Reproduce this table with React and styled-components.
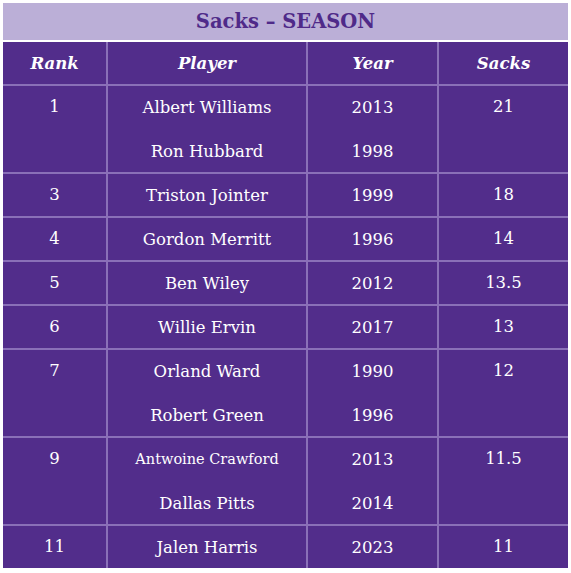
import React from 'react'
import styled, { createGlobalStyle } from 'styled-components'

const GlobalStyle = createGlobalStyle`
    html, body {
        margin: 0;
        padding: 0;
        background: #ffffff;
    }
    body {
        font-family: "DejaVu Serif", "Liberation Serif", serif;
    }
`

const rows = [
    { rank: '1', span: 2, sacks: '21', players: [['Albert Williams', '2013'], ['Ron Hubbard', '1998']] },
    { rank: '3', span: 1, sacks: '18', players: [['Triston Jointer', '1999']] },
    { rank: '4', span: 1, sacks: '14', players: [['Gordon Merritt', '1996']] },
    { rank: '5', span: 1, sacks: '13.5', players: [['Ben Wiley', '2012']] },
    { rank: '6', span: 1, sacks: '13', players: [['Willie Ervin', '2017']] },
    { rank: '7', span: 2, sacks: '12', players: [['Orland Ward', '1990'], ['Robert Green', '1996']] },
    { rank: '9', span: 2, sacks: '11.5', players: [['Antwoine Crawford', '2013', true], ['Dallas Pitts', '2014']] },
    { rank: '11', span: 1, sacks: '11', players: [['Jalen Harris', '2023']] },
]

const Wrapper = styled.div`
    padding: 3px;
    width: 565px;
`

const Title = styled.div`
    background-color: #bbafd7;
    color: #4f2a89;
    font-weight: bold;
    font-size: 19.5px;
    height: 37px;
    line-height: 38px;
    text-align: center;
    margin-bottom: 2px;
`

const Table = styled.table`
    width: 565px;
    border-collapse: collapse;
    table-layout: fixed;
    background-color: #522d8b;
    color: #ffffff;
`

const HeadCell = styled.th`
    height: 42px;
    padding: 0;
    font-size: 16.5px;
    font-weight: bold;
    font-style: italic;
    text-align: center;
    vertical-align: middle;
    border-bottom: 2px solid #8a70b8;
    border-left: ${p => p.$first ? 'none' : '2px solid #8a70b8'};
`

const Cell = styled.td`
    height: 42px;
    padding: 0;
    font-size: ${p => p.$small ? '14.5px' : '16.5px'};
    text-align: center;
    vertical-align: ${p => p.$top ? 'top' : 'middle'};
    line-height: ${p => p.$top ? '42px' : 'normal'};
    border-top: 2px solid ${p => p.$inner ? 'transparent' : '#8a70b8'};
    border-left: ${p => p.$first ? 'none' : '2px solid #8a70b8'};
`

export default function App() {
    return (
        <>
            <GlobalStyle />
            <Wrapper>
                <Title>Sacks – SEASON</Title>
                <Table>
                    <colgroup>
                        <col style={{ width: '104px' }} />
                        <col style={{ width: '200px' }} />
                        <col style={{ width: '131px' }} />
                        <col style={{ width: '130px' }} />
                    </colgroup>
                    <thead>
                        <tr>
                            <HeadCell $first>Rank</HeadCell>
                            <HeadCell>Player</HeadCell>
                            <HeadCell>Year</HeadCell>
                            <HeadCell>Sacks</HeadCell>
                        </tr>
                    </thead>
                    <tbody>
                        {rows.map((row, i) =>
                            row.players.map(([name, year, small], j) => (
                                <tr key={i + '-' + j}>
                                    {j === 0 && <Cell $first $top rowSpan={row.span}>{row.rank}</Cell>}
                                    <Cell $inner={j > 0} $small={small}>{name}</Cell>
                                    <Cell $inner={j > 0}>{year}</Cell>
                                    {j === 0 && <Cell $top rowSpan={row.span}>{row.sacks}</Cell>}
                                </tr>
                            ))
                        )}
                    </tbody>
                </Table>
            </Wrapper>
        </>
    )
}
